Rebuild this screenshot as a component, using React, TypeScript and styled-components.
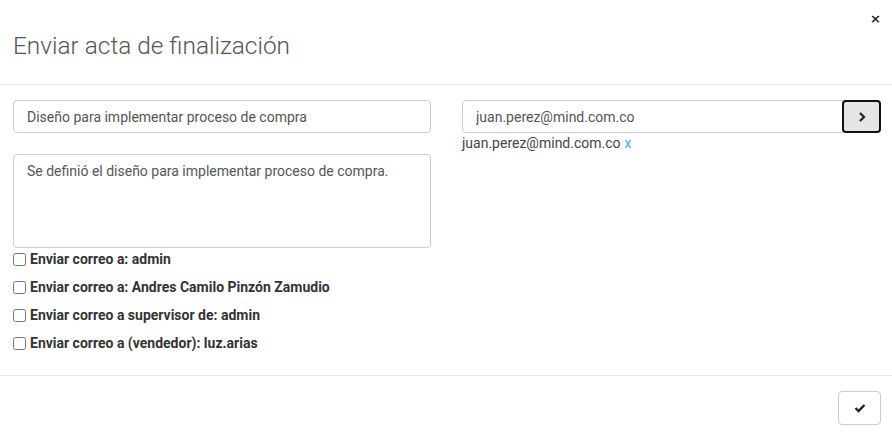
import React from "react";
import styled, { createGlobalStyle } from "styled-components";

const Global = createGlobalStyle`
  html, body { margin: 0; padding: 0; background: #fff; }
  body { font-family: Roboto, "Liberation Sans", Arial, sans-serif; color: #333; }
  * { box-sizing: border-box; }
`;

const Modal = styled.div`
  width: 892px;
  height: 437px;
  background: #fff;
  display: flex;
  flex-direction: column;
`;

const Header = styled.div`
  position: relative;
  height: 85px;
  border-bottom: 1px solid #e5e5e5;
  padding: 31px 13px 0;
`;

const Title = styled.h4`
  margin: 0;
  font-family: Roboto, "Liberation Sans", sans-serif;
  font-weight: 300;
  font-size: 24.4px;
  line-height: 30px;
  color: #555;
`;

const Close = styled.button`
  position: absolute;
  top: 11px;
  right: 11px;
  border: 0;
  background: transparent;
  padding: 0;
  font-family: "DejaVu Sans", sans-serif;
  font-weight: bold;
  font-size: 13px;
  line-height: 16px;
  color: #222;
  cursor: pointer;
`;

const Body = styled.div`
  display: grid;
  grid-template-columns: 418px 419px;
  column-gap: 31px;
  padding: 15px 11px 0 13px;
  height: 291px;
  border-bottom: 1px solid #e5e5e5;
`;

const Column = styled.div`
  display: flex;
  flex-direction: column;
`;

const TextInput = styled.input`
  width: 100%;
  height: 33px;
  padding: 6px 13px;
  border: 1px solid #ccc;
  border-radius: 4px;
  font-family: Roboto, "Liberation Sans", sans-serif;
  font-size: 14px;
  color: #555;
  background: #fff;
  outline: none;
`;

const TextArea = styled.textarea`
  width: 100%;
  height: 94px;
  margin-top: 21px;
  padding: 6px 13px;
  border: 1px solid #ccc;
  border-radius: 4px;
  font-family: Roboto, "Liberation Sans", sans-serif;
  font-size: 14px;
  line-height: 20px;
  color: #555;
  resize: none;
  outline: none;
`;

const CheckList = styled.div`
  display: flex;
  flex-direction: column;
  margin-top: 1px;
`;

const CheckRow = styled.label<{ $first?: boolean }>`
  display: flex;
  align-items: center;
  height: 28px;
  font-family: Roboto, "Liberation Sans", sans-serif;
  font-weight: 700;
  font-size: 14px;
  color: #333;
  margin-top: ${(p) => (p.$first ? "-4px" : "0")};
`;

const Box = styled.input`
  width: 13px;
  height: 13px;
  margin: 0 4px 0 0;
`;

const InputGroup = styled.div`
  display: flex;
  height: 33px;
`;

const GroupInput = styled(TextInput)`
  flex: 1;
  border-radius: 4px 0 0 4px;
`;

const GroupButton = styled.button`
  width: 39px;
  height: 33px;
  margin-left: -1px;
  border: 2px solid #111;
  border-radius: 4px;
  background: #e6e6e6;
  display: flex;
  align-items: center;
  justify-content: center;
  padding: 0;
`;

const Tag = styled.div`
  margin-top: 1px;
  font-family: Roboto, "Liberation Sans", sans-serif;
  font-size: 14px;
  line-height: 18px;
  color: #444;
`;

const TagRemove = styled.span`
  color: #31b0d5;
  margin-left: 4px;
`;

const Footer = styled.div`
  display: flex;
  justify-content: flex-end;
  padding: 15px 11px 0;
`;

const OkButton = styled.button`
  width: 43px;
  height: 34px;
  border: 1px solid #ccc;
  border-radius: 4px;
  background: #fff;
  display: flex;
  align-items: center;
  justify-content: center;
  padding: 0;
`;

const checks = [
  "Enviar correo a: admin",
  "Enviar correo a: Andres Camilo Pinzón Zamudio",
  "Enviar correo a supervisor de: admin",
  "Enviar correo a (vendedor): luz.arias",
];

export default function App() {
  return (
    <>
      <Global />
      <Modal>
        <Header>
          <Title>Enviar acta de finalización</Title>
          <Close>×</Close>
        </Header>
        <Body>
          <Column>
            <TextInput defaultValue="Diseño para implementar proceso de compra" />
            <TextArea defaultValue="Se definió el diseño para implementar proceso de compra." />
            <CheckList>
              {checks.map((c, i) => (
                <CheckRow key={c} $first={i === 0}>
                  <Box type="checkbox" />
                  {c}
                </CheckRow>
              ))}
            </CheckList>
          </Column>
          <Column>
            <InputGroup>
              <GroupInput defaultValue="juan.perez@mind.com.co" />
              <GroupButton>
                <svg width="10" height="12" viewBox="0 0 10 12">
                  <path d="M3 2 L7 6 L3 10" stroke="#222" strokeWidth="2.2" fill="none" />
                </svg>
              </GroupButton>
            </InputGroup>
            <Tag>
              juan.perez@mind.com.co<TagRemove>x</TagRemove>
            </Tag>
          </Column>
        </Body>
        <Footer>
          <OkButton>
            <svg width="12" height="10" viewBox="0 0 12 10">
              <path d="M1.5 5 L4.5 8 L10.5 2" stroke="#222" strokeWidth="2.4" fill="none" />
            </svg>
          </OkButton>
        </Footer>
      </Modal>
    </>
  );
}
